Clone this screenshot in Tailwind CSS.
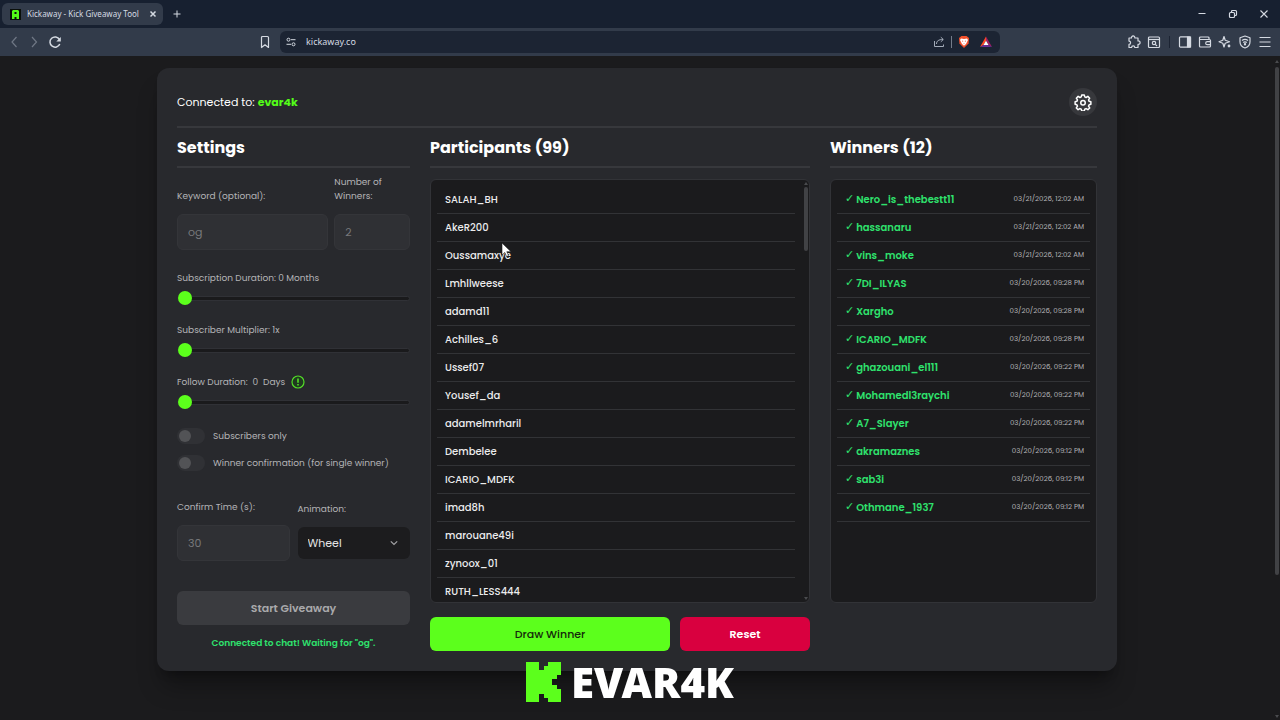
<!DOCTYPE html>
<html lang="en">
<head>
  <meta charset="UTF-8" />
  <meta name="viewport" content="width=device-width, initial-scale=1.0" />
  <title>Kickaway - Kick Giveaway Tool</title>
  <script src="https://cdn.jsdelivr.net/npm/@tailwindcss/browser@4"></script>
</head>
<body class="h-screen flex flex-col overflow-hidden bg-[#1b1b1d] text-white font-['Poppins','Inter',sans-serif]">

  <!-- Tab strip -->
  <div class="flex h-7 shrink-0 items-center bg-[#172030] pl-0.5 text-[#d5dae2]">
    <div class="flex h-[22px] w-[161px] items-center gap-1.5 rounded-md bg-[#323b4a] pl-2 pr-1">
      <svg class="size-[11px] shrink-0" viewBox="0 0 11 11"><path fill="#0a0f0a" d="M0 0h11v11H0z"/><path fill="#53fc18" fill-rule="evenodd" d="M3 1h5l1 1v8H6.500V8h-2v2H2V2zM4.500 3v2h2V3z"/></svg>
      <span class="flex-1 whitespace-nowrap font-['Noto_Sans',sans-serif] text-[8px]">Kickaway - Kick Giveaway Tool</span>
      <button class="size-3" aria-label="Close tab"><svg viewBox="0 0 12 12" fill="none" stroke="currentColor" stroke-width="1.500"><path d="M3.500 3.500l5 5M8.500 3.500l-5 5"/></svg></button>
    </div>
    <button class="ml-2 size-3" aria-label="New tab"><svg viewBox="0 0 12 12" fill="none" stroke="currentColor" stroke-width="1"><path d="M6 2.500v7M2.500 6h7"/></svg></button>
    <div class="ml-auto flex items-center gap-[19px] pr-2.5">
      <button class="size-3" aria-label="Minimize"><svg viewBox="0 0 12 12" fill="none" stroke="currentColor"><path d="M2.500 5.500h7"/></svg></button>
      <button class="size-3" aria-label="Restore"><svg viewBox="0 0 12 12" fill="none" stroke="currentColor" stroke-width="1.200"><rect x="2.500" y="4.500" width="5" height="5" rx="1"/><path d="M4.500 4.500v-1a1 1 0 0 1 1-1h3a1 1 0 0 1 1 1v3a1 1 0 0 1-1 1h-1"/></svg></button>
      <button class="size-3" aria-label="Close"><svg viewBox="0 0 12 12" fill="none" stroke="currentColor" stroke-width="1.100"><path d="M2.500 2.500l7 7M9.500 2.500l-7 7"/></svg></button>
    </div>
  </div>

  <!-- Toolbar -->
  <div class="flex h-7 shrink-0 items-center gap-2 bg-[#323b4a] px-2 text-[#d5dae2]">
    <div class="flex flex-1 items-center gap-2">
      <button class="size-3 text-[#6f7785]" aria-label="Back"><svg viewBox="0 0 12 12" fill="none" stroke="currentColor" stroke-width="1.200"><path d="M8.500 1L4 6l4.500 5"/></svg></button>
      <button class="size-3 text-[#6f7785]" aria-label="Forward"><svg viewBox="0 0 12 12" fill="none" stroke="currentColor" stroke-width="1.200"><path d="M4 1l4.500 5L4 11"/></svg></button>
      <button class="size-3.5" aria-label="Reload"><svg viewBox="0 0 14 14" fill="none" stroke="currentColor" stroke-width="1.500"><path d="M11.800 9A5.100 5.100 0 1 1 11.500 4.500"/><path fill="currentColor" stroke="none" d="M12.800 2v4.500H8.300z"/></svg></button>
      <button class="ml-auto size-3.5" aria-label="Bookmark"><svg viewBox="0 0 14 14" fill="none" stroke="currentColor" stroke-width="1.200" stroke-linejoin="round"><path d="M3.500 2.500a1 1 0 0 1 1-1h5a1 1 0 0 1 1 1v10L7 9.800l-3.500 2.700z"/></svg></button>
    </div>
    <div class="flex h-[22px] w-[720px] items-center rounded-md bg-[#1c2433] px-1.5">
      <svg class="size-2.5" viewBox="0 0 10 10" fill="none" stroke="currentColor"><circle cx="2.500" cy="2.700" r="1.500"/><path d="M5 2.700h4.500M0.500 7.300H5"/><circle cx="7.500" cy="7.300" r="1.500"/></svg>
      <input class="ml-2.5 min-w-0 flex-1 bg-transparent font-['Noto_Sans',sans-serif] text-[9px] outline-none" aria-label="Address" value="kickaway.co" />
      <svg class="size-3" viewBox="0 0 12 12" fill="none" stroke="#a3abb8"><path d="M1.500 5v5.500h9V8.500M3.500 8c0-3 2-4.500 6.500-4.500M7.800 1.200L10.300 3.500 7.800 5.800"/></svg>
      <span class="mx-1.5 h-3 w-px bg-[#747c8a]"></span>
      <svg class="size-3" viewBox="0 0 12 12"><path fill="#f2502b" d="M3.500 0h5L11 2l-.4 5.500L6 12 1.400 7.500 1 2z"/><path fill="#fff" d="M3 2.500l3 .5 3-.5 1 1.500-2 4-2 1.800L4 8 2 4z"/><path fill="#f2502b" d="M3.800 4.500l1.500.5-.5 1zM8.200 4.500L6.700 5l.5 1zM5.200 7.500h1.600L6 8.300z"/></svg>
      <svg class="ml-2.5 mr-0.5 size-3" viewBox="0 0 12 12"><path fill="#ff4724" d="M6 0.500L0 11l3.500-2L6 5z"/><path fill="#9e1f63" d="M6 0.500L12 11 8.500 9 6 5z"/><path fill="#662d91" d="M0 11h12L8.500 9h-5z"/><path fill="#fff" d="M6 4.800L8.500 9h-5z"/></svg>
    </div>
    <div class="flex flex-1 items-center justify-end gap-1.5">
      <svg class="size-3.5" viewBox="0 0 14 14" fill="none" stroke="currentColor" stroke-width="1.200" stroke-linejoin="round"><path d="M2 3h2.500a1.700 1.700 0 1 1 3.300 0H11v3a1.700 1.700 0 1 1 0 3.300V12.500H7.800a1.600 1.600 0 0 0-3.200 0H2V9.300a1.600 1.600 0 0 0 0-3.200z"/></svg>
      <svg class="size-3.5" viewBox="0 0 14 14" fill="none" stroke="currentColor" stroke-width="1.200"><rect x="1.500" y="2" width="11" height="10.500" rx="1"/><path d="M1.500 4.500h11"/><circle cx="7" cy="8" r="1.700"/><path d="M8.300 9.300l1.700 1.700"/></svg>
      <span class="mx-0.5 h-3 w-px bg-[#1c2433]"></span>
      <svg class="size-3.5" viewBox="0 0 14 14" fill="none" stroke="currentColor" stroke-width="1.200"><rect x="1.500" y="1.800" width="11" height="10.400" rx="1"/><path fill="currentColor" d="M9.500 2h3v10h-3z"/></svg>
      <svg class="size-3.5" viewBox="0 0 14 14" fill="none" stroke="currentColor" stroke-width="1.200"><path d="M11 4.500V3a1 1 0 0 0-1-1H2.500a1 1 0 0 0-1 1v8a1 1 0 0 0 1 1h9a1 1 0 0 0 1-1V5.500a1 1 0 0 0-1-1H1.500M12.500 6.700H9.200a1.500 1.500 0 0 0 0 3h3.300"/></svg>
      <svg class="size-3.5" viewBox="0 0 14 14" fill="none" stroke="currentColor" stroke-width="1.200" stroke-linejoin="round"><path d="M6 1.500l1.200 3.800L11.500 6.800 7.200 8.200 6 12 4.800 8.200 1 6.800l3.800-1.500z"/><circle cx="11" cy="11" r="1.400" fill="currentColor" stroke="none"/></svg>
      <svg class="size-3.5" viewBox="0 0 14 14" fill="none" stroke="currentColor" stroke-width="1.200" stroke-linejoin="round"><path d="M7 1l5 1.700v4c0 3-2 5.300-5 6.300-3-1-5-3.300-5-6.300v-4z"/><path d="M4 5.500c2-1.500 4-1.500 6 0M5.200 7.500c1.200-.9 2.400-.9 3.600 0"/><circle cx="7" cy="9.200" r=".6" fill="currentColor"/></svg>
      <button class="size-3.5" aria-label="Menu"><svg viewBox="0 0 14 14" fill="none" stroke="currentColor" stroke-width="1.200"><path d="M1.500 2.500h11M1.500 7h11M1.500 11.500h11"/></svg></button>
    </div>
  </div>

  <div class="flex min-h-0 flex-1">
    <main class="min-w-0 flex-1 px-4 pt-3">
      <div class="mx-auto max-w-[960px] rounded-xl bg-[#28292d] px-5 pb-5 pt-4 shadow-xl shadow-black/30">

        <header class="flex h-11 items-start justify-between border-b-2 border-[#37383c]">
          <p class="pt-2.5 text-[11px]">Connected to: <b class="text-[#53fc18]">evar4k</b></p>
          <button class="mt-1 flex size-7 items-center justify-center rounded-full bg-[#37383c]" aria-label="Options">
            <svg class="size-[18px]" viewBox="0 0 24 24" fill="none" stroke="currentColor" stroke-width="2" stroke-linejoin="round"><path d="M10.300 2.500h3.400l.6 2.700 1.800.8 2.400-1.500 2.400 2.400-1.500 2.400.8 1.800 2.300.6v3.400l-2.300.6-.8 1.800 1.500 2.400-2.400 2.400-2.400-1.500-1.800.8-.6 2.300h-3.400l-.6-2.300-1.800-.8-2.400 1.500-2.400-2.400 1.500-2.400-.8-1.800-2.300-.6v-3.400l2.300-.6.8-1.800-1.500-2.400 2.400-2.400L7.900 6l1.800-.8z"/><circle cx="12" cy="13" r="3"/></svg>
          </button>
        </header>

        <div class="grid grid-cols-[233fr_380fr_267fr] gap-5">

          <!-- Settings -->
          <section class="min-w-0">
            <h2 class="h-10 border-b-2 border-[#37383c] pt-1.5 text-[16px] leading-7 font-bold">Settings</h2>
            <div class="mt-[7px] grid grid-cols-[2fr_1fr] gap-1.5 text-[9px] leading-3.5 text-[#b4b4b7]">
              <label for="keyword" class="self-end">Keyword (optional):</label>
              <label for="winnerCount">Number of<br />Winners:</label>
              <input id="keyword" disabled value="og" class="mt-[5px] h-9 w-full min-w-0 rounded-md border border-[#343539] bg-[#2f3034] px-2.5 text-[11px] text-[#77787b]" />
              <input id="winnerCount" disabled value="2" class="mt-[5px] h-9 w-full min-w-0 rounded-md border border-[#343539] bg-[#2f3034] px-2.5 text-[11px] text-[#77787b]" />
            </div>

            <div class="mt-5 flex flex-col gap-[17px] text-[9px] leading-4 text-[#b4b4b7]">
              <div>
                <label for="subDuration" class="block">Subscription Duration: 0 Months</label>
                <input id="subDuration" type="range" min="0" max="12" value="0" class="mt-[5px] block h-3.5 w-full appearance-none bg-transparent [&::-webkit-slider-runnable-track]:h-[5px] [&::-webkit-slider-runnable-track]:rounded-full [&::-webkit-slider-runnable-track]:border [&::-webkit-slider-runnable-track]:border-[#303136] [&::-webkit-slider-runnable-track]:bg-[#1a1a1c] [&::-webkit-slider-thumb]:-mt-[6px] [&::-webkit-slider-thumb]:size-3.5 [&::-webkit-slider-thumb]:appearance-none [&::-webkit-slider-thumb]:rounded-full [&::-webkit-slider-thumb]:bg-[#5cff1c]" />
              </div>
              <div>
                <label for="subMultiplier" class="block">Subscriber Multiplier: 1x</label>
                <input id="subMultiplier" type="range" min="1" max="10" value="1" class="mt-[5px] block h-3.5 w-full appearance-none bg-transparent [&::-webkit-slider-runnable-track]:h-[5px] [&::-webkit-slider-runnable-track]:rounded-full [&::-webkit-slider-runnable-track]:border [&::-webkit-slider-runnable-track]:border-[#303136] [&::-webkit-slider-runnable-track]:bg-[#1a1a1c] [&::-webkit-slider-thumb]:-mt-[6px] [&::-webkit-slider-thumb]:size-3.5 [&::-webkit-slider-thumb]:appearance-none [&::-webkit-slider-thumb]:rounded-full [&::-webkit-slider-thumb]:bg-[#5cff1c]" />
              </div>
              <div>
                <label for="followDuration" class="flex items-center">Follow Duration:&nbsp; 0&nbsp; Days
                  <svg class="ml-1.5 size-3.5" viewBox="0 0 14 14" fill="#1f3a1f" stroke="#53dc28" stroke-width="1.200"><circle cx="7" cy="7" r="6"/><path stroke-width="1.600" d="M7 3.500v4.200M7 9v1.500"/></svg>
                </label>
                <input id="followDuration" type="range" min="0" max="365" value="0" class="mt-[5px] block h-3.5 w-full appearance-none bg-transparent [&::-webkit-slider-runnable-track]:h-[5px] [&::-webkit-slider-runnable-track]:rounded-full [&::-webkit-slider-runnable-track]:border [&::-webkit-slider-runnable-track]:border-[#303136] [&::-webkit-slider-runnable-track]:bg-[#1a1a1c] [&::-webkit-slider-thumb]:-mt-[6px] [&::-webkit-slider-thumb]:size-3.5 [&::-webkit-slider-thumb]:appearance-none [&::-webkit-slider-thumb]:rounded-full [&::-webkit-slider-thumb]:bg-[#5cff1c]" />
              </div>
            </div>

            <div class="mt-[19px] flex flex-col gap-[11px] text-[9px] leading-4 text-[#b4b4b7]">
              <label class="flex items-center gap-2">
                <input type="checkbox" disabled class="flex h-4 w-7 shrink-0 appearance-none items-center rounded-full bg-[#303135] px-0.5 before:size-3 before:rounded-full before:bg-[#525356]" />
                Subscribers only
              </label>
              <label class="flex items-center gap-2 whitespace-nowrap">
                <input type="checkbox" disabled class="flex h-4 w-7 shrink-0 appearance-none items-center rounded-full bg-[#303135] px-0.5 before:size-3 before:rounded-full before:bg-[#525356]" />
                Winner confirmation (for single winner)
              </label>
            </div>

            <div class="mt-7 grid grid-cols-2 gap-2 text-[9px] leading-4 text-[#b4b4b7]">
              <div>
                <label for="confirmTime" class="block">Confirm Time (s):</label>
                <input id="confirmTime" disabled value="30" class="mt-2.5 h-9 w-full rounded-md border border-[#343539] bg-[#2f3034] px-2.5 text-[11px] text-[#77787b]" />
              </div>
              <div>
                <label for="animation" class="block pt-0.5">Animation:</label>
                <div class="relative mt-2.5">
                  <select id="animation" class="h-8 w-full appearance-none rounded-md bg-[#1c1c1e] px-2.5 text-[11px] text-[#e4e4e5]"><option>Wheel</option></select>
                  <svg class="pointer-events-none absolute right-3 top-3 size-2" viewBox="0 0 8 8" fill="none" stroke="#a3a3a6" stroke-width="1.200"><path d="M.8 2.300L4 5.500l3.200-3.200"/></svg>
                </div>
              </div>
            </div>

            <button disabled class="mt-[30px] h-[34px] w-full rounded-md bg-[#3a3b3f] text-[11px] font-semibold text-[#a9a9ab]">Start Giveaway</button>
            <p class="mt-2.5 text-center text-[9px] leading-4 font-semibold text-[#2fe26d]">Connected to chat! Waiting for "og".</p>
          </section>

          <!-- Participants -->
          <section class="min-w-0">
            <h2 class="h-10 border-b-2 border-[#37383c] pt-1.5 text-[16px] leading-7 font-bold">Participants (99)</h2>
            <div class="mt-[11px] flex h-[424px] overflow-hidden rounded-md border border-[#323337] bg-[#1b1b1d]">
              <ul id="participants" class="min-w-0 flex-1 overflow-hidden py-[6px] pl-1.5 pr-2"></ul>
              <div class="flex w-1.5 flex-col items-center py-0.5">
                <span class="border-x-2 border-b-3 border-x-transparent border-b-[#4a4b4e]"></span>
                <span class="mt-0.5 h-16 w-1 rounded-full bg-[#414245]"></span>
                <span class="mt-auto border-x-2 border-t-3 border-x-transparent border-t-[#4a4b4e]"></span>
              </div>
            </div>
            <div class="mt-3.5 flex gap-2.5 text-[11px] font-semibold">
              <button class="h-[34px] flex-[240] rounded-md bg-[#5cff1c] text-[#14280b] font-medium">Draw Winner</button>
              <button class="h-[34px] flex-[130] rounded-md bg-[#d9003f]">Reset</button>
            </div>
          </section>

          <!-- Winners -->
          <section class="min-w-0">
            <h2 class="h-10 border-b-2 border-[#37383c] pt-1.5 text-[16px] leading-7 font-bold">Winners (12)</h2>
            <ul id="winners" class="mt-[11px] h-[424px] overflow-hidden rounded-md border border-[#323337] bg-[#1b1b1d] px-1.5 py-[6px]"></ul>
          </section>
        </div>
      </div>
    </main>

    <!-- Page scrollbar -->
    <div class="flex w-1.5 shrink-0 flex-col items-center bg-[#1b1b1d] py-0.5">
      <span class="mt-0.5 border-x-2 border-b-3 border-x-transparent border-b-[#4a4b4e]"></span>
      <span class="mt-1 h-[508px] w-1 rounded-full bg-[#414245]"></span>
      <span class="mt-auto border-x-2 border-t-3 border-x-transparent border-t-[#4a4b4e]"></span>
    </div>
  </div>

  <!-- Channel watermark -->
  <div class="fixed bottom-[18px] left-[526px] flex items-center gap-2.5">
    <svg class="h-10 w-[35px]" viewBox="0 0 35 40" fill="#5cff1c"><path d="M0 0h13v8h5V4h4V0h13v13h-4v4h-5v6h5v4h4v13H22v-4h-4v-4h-5v8H0z"/></svg>
    <span class="font-['Noto_Sans',sans-serif] text-[42px] leading-10 font-black">EVAR4K</span>
  </div>

  <!-- Cursor -->
  <svg class="pointer-events-none fixed left-[501px] top-[242px] h-4 w-3" viewBox="0 0 12 16"><path fill="#fff" stroke="#1b1b1d" stroke-width=".6" d="M1 1v12l2.800-2.500 1.800 4 2-.9-1.800-3.900H10z"/></svg>

  <script>
    const participants = [
      "SALAH_BH", "AkeR200", "Oussamaxye", "Lmhllweese", "adamd11", "Achilles_6", "Ussef07", "Yousef_da",
      "adamelmrharil", "Dembelee", "ICARIO_MDFK", "imad8h", "marouane49i", "zynoox_01", "RUTH_LESS444"
    ];

    const winners = [
      ["Nero_is_thebestt11", "03/21/2026, 12:02 AM"],
      ["hassanaru", "03/21/2026, 12:02 AM"],
      ["vins_moke", "03/21/2026, 12:02 AM"],
      ["7DI_ILYAS", "03/20/2026, 09:28 PM"],
      ["Xargho", "03/20/2026, 09:28 PM"],
      ["ICARIO_MDFK", "03/20/2026, 09:28 PM"],
      ["ghazouani_el111", "03/20/2026, 09:22 PM"],
      ["Mohamedl3raychi", "03/20/2026, 09:22 PM"],
      ["A7_Slayer", "03/20/2026, 09:22 PM"],
      ["akramaznes", "03/20/2026, 09:12 PM"],
      ["sab3i", "03/20/2026, 09:12 PM"],
      ["Othmane_1937", "03/20/2026, 09:12 PM"]
    ];

    document.getElementById("participants").innerHTML = participants.map(name => `
      <li class="flex h-7 items-center border-b border-[#323336] px-2 text-[10px] font-medium text-[#ececed]">${name}</li>
    `).join("");

    document.getElementById("winners").innerHTML = winners.map(([name, date]) => `
      <li class="flex h-7 items-center justify-between border-b border-[#323336] pl-2 pr-1.5 whitespace-nowrap">
        <span class="flex items-center gap-0.5 text-[10px] font-semibold text-[#2fe26d]"><span class="font-['DejaVu_Sans',sans-serif] text-[11px] font-normal">✓</span>${name}</span>
        <time class="text-[7px] text-[#b4b4b7]">${date}</time>
      </li>
    `).join("");
  </script>
</body>
</html>
